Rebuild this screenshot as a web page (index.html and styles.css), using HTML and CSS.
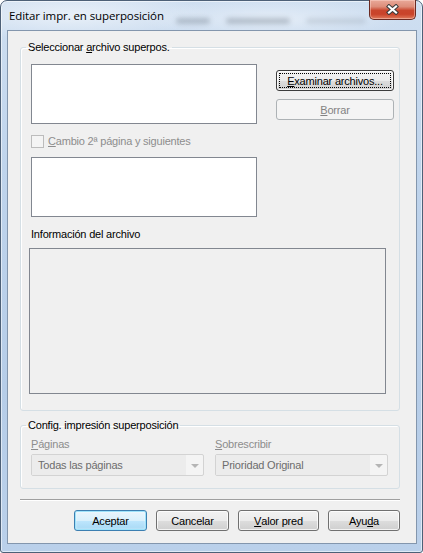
FILE: index.html
```html
<!DOCTYPE html>
<html lang="es">
<head>
<meta charset="utf-8">
<title>Editar impr. en superposición</title>
<link rel="stylesheet" href="styles.css">
</head>
<body>
<div class="window">
  <div class="titlebar">
    <span class="title">Editar impr. en superposición</span>
    <span class="glass-blur"><i class="b1"></i><i class="b2"></i><i class="b3"></i></span>
    <button class="close" aria-label="Cerrar">
      <svg width="13" height="11" viewBox="0 0 13 11">
        <path d="M3 2.5 L10 8.5 M10 2.5 L3 8.5" stroke="#3b3b3b" stroke-width="4.2" stroke-linecap="square" fill="none"/>
        <path d="M3 2.5 L10 8.5 M10 2.5 L3 8.5" stroke="#ffffff" stroke-width="2.2" stroke-linecap="square" fill="none"/>
      </svg>
    </button>
  </div>
  <div class="client">
    <fieldset class="group g1">
      <legend>Seleccionar <u>a</u>rchivo superpos.</legend>
      <div class="gbody gbody1">
        <div class="top-row">
          <div class="listbox"></div>
          <div class="btncol">
            <button class="btn focus"><span class="focus-ring"><u>E</u>xaminar archivos...</span></button>
            <button class="btn disabled"><u>B</u>orrar</button>
          </div>
        </div>
        <label class="check disabled"><span class="box"></span><span><u>C</u>ambio 2ª página y siguientes</span></label>
        <div class="listbox lb2"></div>
        <div class="label">Información del archivo</div>
        <div class="infobox"></div>
      </div>
    </fieldset>
    <fieldset class="group g2">
      <legend>Config. impresión superposición</legend>
      <div class="gbody gbody2">
        <div class="field">
          <div class="flabel"><u>P</u>áginas</div>
          <div class="combo"><span class="cval">Todas las páginas</span><span class="carrow"></span></div>
        </div>
        <div class="field">
          <div class="flabel"><u>S</u>obrescribir</div>
          <div class="combo"><span class="cval">Prioridad Original</span><span class="carrow"></span></div>
        </div>
      </div>
    </fieldset>
    <div class="sep"></div>
    <div class="actions">
      <button class="btn default w-acept">Aceptar</button>
      <button class="btn w-cancel">Cancelar</button>
      <button class="btn w-valor"><u>V</u>alor pred</button>
      <button class="btn w-ayuda">Ayu<u>d</u>a</button>
    </div>
  </div>
</div>
</body>
</html>
```
FILE: styles.css
```css
html, body {
  margin: 0;
  padding: 0;
}
body {
  width: 423px;
  height: 553px;
  overflow: hidden;
  background: #ffffff;
  font-family: "Liberation Sans", Arial, sans-serif;
  font-size: 11px;
  letter-spacing: -0.2px;
  color: #000;
}
u { text-decoration: underline; text-underline-offset: 1px; }

.window {
  box-sizing: border-box;
  width: 423px;
  height: 553px;
  border: 1px solid #4d6077;
  border-radius: 7px 7px 3px 3px;
  background:
    radial-gradient(ellipse 140px 26px at 70px 14px, rgba(255,255,255,0.55), rgba(255,255,255,0) 100%),
    radial-gradient(ellipse 130px 20px at 270px 18px, rgba(255,255,255,0.45), rgba(255,255,255,0) 100%),
    linear-gradient(180deg, #cfdff1 0%, #bfd4ec 30%, #b6cde8 70%, #bad0ea 100%);
  box-shadow: inset 0 0 0 1px rgba(255,255,255,0.55);
  display: flex;
  flex-direction: column;
}

.titlebar {
  height: 29px;
  display: flex;
  align-items: flex-start;
  flex: none;
}
.title {
  font-family: "Open Sans", "Noto Sans", sans-serif;
  font-size: 11.5px;
  line-height: 16px;
  padding: 7px 0 0 8px;
  color: #000;
  white-space: nowrap;
  letter-spacing: -0.1px;
}
.glass-blur {
  display: flex;
  gap: 16px;
  margin: 17px 0 0 12px;
  filter: blur(2.5px);
  opacity: 0.4;
}
.glass-blur i {
  display: block;
  height: 6px;
  background: #6f7b89;
  border-radius: 3px;
}
.glass-blur .b1 { width: 34px; }
.glass-blur .b2 { width: 64px; }
.glass-blur .b3 { width: 60px; opacity: 0.5; }

.close {
  margin: -1px 6px 0 auto;
  width: 47px;
  height: 20px;
  padding: 0;
  border: 1px solid #6a2a22;
  border-top: none;
  border-radius: 0 0 5px 5px;
  background: linear-gradient(180deg, #e9a999 0%, #dd8d7a 35%, #c9452c 55%, #c9432a 75%, #e07a5c 100%);
  box-shadow: inset 0 0 0 1px rgba(255,220,210,0.45);
  display: flex;
  align-items: center;
  justify-content: center;
}
.close svg { display: block; }

.client {
  flex: 1;
  margin: 0 5px 8px 6px;
  border: 1px solid #8396ad;
  background: #f0f0f0;
  display: flex;
  flex-direction: column;
}

.group {
  margin: 0 0 0 12px;
  padding: 0;
  width: 380px;
  box-sizing: border-box;
  border: 1px solid #d5dfe5;
  border-radius: 3px;
  min-width: 0;
  box-shadow: inset 1px 1px 0 #ffffff;
}
.group legend {
  padding: 0 2px;
  margin-left: 5px;
  line-height: 13px;
  font-size: 11px;
}
.g1 { margin-top: 10px; }
.g2 { margin-top: 8px; }

.gbody1 {
  padding: 10px 10px 16px 10px;
  display: flex;
  flex-direction: column;
  align-items: flex-start;
}
.top-row {
  display: flex;
  align-items: flex-start;
}
.listbox {
  box-sizing: border-box;
  width: 226px;
  height: 60px;
  background: #fff;
  border: 1px solid #828790;
}
.btncol {
  margin: 6px 0 0 19px;
  display: flex;
  flex-direction: column;
  gap: 8px;
}
.btn {
  box-sizing: border-box;
  height: 21px;
  padding: 0;
  font-family: "Liberation Sans", Arial, sans-serif;
  font-size: 11px;
  letter-spacing: -0.2px;
  color: #000;
  border: 1px solid #707070;
  border-radius: 3px;
  background: linear-gradient(180deg, #f2f2f2 0%, #ebebeb 50%, #dddddd 51%, #cfcfcf 100%);
  box-shadow: inset 0 0 0 1px rgba(255,255,255,0.75);
  display: flex;
  align-items: center;
  justify-content: center;
}
.btncol .btn { width: 118px; }
.btn.focus {
  border-color: #3c3c3c;
  padding: 2px;
}
.focus-ring {
  flex: 1;
  align-self: stretch;
  display: flex;
  align-items: center;
  justify-content: center;
  outline: 1px dotted #000;
  outline-offset: -1px;
}
.btn.disabled {
  border-color: #adb2b5;
  background: #f4f4f4;
  color: #838383;
  box-shadow: none;
}

.check {
  margin-top: 11px;
  display: flex;
  align-items: center;
  gap: 4px;
  line-height: 13px;
}
.check .box {
  box-sizing: border-box;
  width: 13px;
  height: 13px;
  border: 1px solid #bcbcbc;
  background: #f4f4f4;
}
.check.disabled { color: #8d8d8d; }
.lb2 { margin-top: 9px; }
.label {
  margin-top: 11px;
  line-height: 13px;
}
.infobox {
  margin: 7px 0 0 -2px;
  box-sizing: border-box;
  width: 357px;
  height: 146px;
  border: 1px solid #828790;
  background: #f0f0f0;
}

.gbody2 {
  padding: 6px 10px 12px 10px;
  display: grid;
  grid-template-columns: 173px 173px;
  column-gap: 11px;
}
.flabel {
  line-height: 13px;
  color: #8d8d8d;
}
.combo {
  margin-top: 3px;
  box-sizing: border-box;
  height: 22px;
  border: 1px solid #d3d3d3;
  background: #f4f4f4;
  border-radius: 2px;
  display: flex;
  align-items: center;
}
.cval {
  flex: 1;
  align-self: stretch;
  display: flex;
  align-items: center;
  padding-left: 6px;
  background: #ececec;
  color: #6d6d6d;
}
.carrow {
  width: 17px;
  height: 100%;
  display: flex;
  align-items: center;
  justify-content: center;
}
.carrow::after {
  content: "";
  border-left: 4px solid transparent;
  border-right: 4px solid transparent;
  border-top: 4px solid #b5b5b5;
  margin-top: 1px;
}

.sep {
  margin: 10px 0 0 12px;
  width: 380px;
  height: 0;
  border-top: 1px solid #a0a0a0;
  border-bottom: 1px solid #ffffff;
}
.actions {
  margin-top: 9px;
  padding-right: 16px;
  display: flex;
  justify-content: flex-end;
  gap: 9px;
}
.w-acept { width: 73px; }
.w-cancel { width: 73px; }
.w-valor { width: 81px; }
.w-ayuda { width: 72px; }
.btn.default {
  border-color: #3c7fb1;
  background: linear-gradient(180deg, #eaf6fd 0%, #d9f0fc 50%, #bee6fd 51%, #a7d9f5 100%);
  box-shadow: inset 0 0 0 1px #9fe3fb, inset 0 0 2px 1px rgba(255,255,255,0.6);
}
```
